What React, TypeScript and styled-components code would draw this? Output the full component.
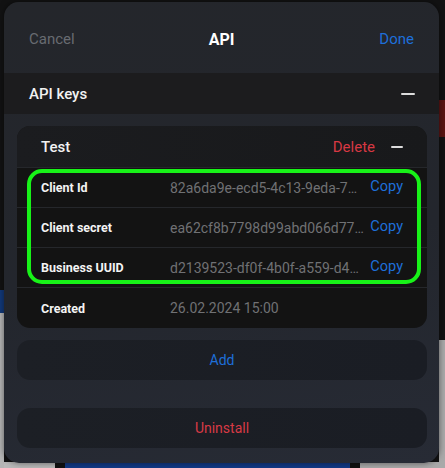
import React from "react";
import styled, { createGlobalStyle } from "styled-components";

const Global = createGlobalStyle`
  html, body { margin: 0; padding: 0; }
  body {
    width: 445px;
    height: 468px;
    overflow: hidden;
    font-family: Roboto, "Liberation Sans", sans-serif;
    background: #121213;
  }
`;

const Backdrop = styled.div`
  position: relative;
  width: 445px;
  height: 468px;
  padding: 2px 6px 5px 4px;
  box-sizing: border-box;
  background:
    linear-gradient(#12397a, #12397a) 0 290px / 4px 23px no-repeat,
    linear-gradient(#b5b5b5, #b5b5b5) 0 313px / 4px 155px no-repeat,
    linear-gradient(#5a1412, #5a1412) 439px 100px / 6px 37px no-repeat,
    linear-gradient(#a9a9a9, #a9a9a9) 439px 340px / 6px 128px no-repeat,
    linear-gradient(to right, #b9b9b9 0 55px, #111 55px 65px, #123a86 65px 350px, #111 350px 360px, #a9a9a9 360px) 0 462px / 445px 6px no-repeat,
    #121213;
`;

const Sheet = styled.div`
  height: 100%;
  border-radius: 15px;
  background: linear-gradient(170deg, #24262b 0%, #23262d 55%, #272b35 100%);
  display: flex;
  flex-direction: column;
  overflow: hidden;
  box-shadow: 0 0 6px rgba(0, 0, 0, 0.5);
`;

const Header = styled.div`
  height: 71px;
  box-sizing: border-box;
  padding: 3px 25px 0;
  display: grid;
  grid-template-columns: 1fr auto 1fr;
  align-items: center;
  flex-shrink: 0;
`;

const HeaderAction = styled.span<{ $tone: "muted" | "blue"; $align: "start" | "end" }>`
  font-size: 15px;
  color: ${(p) => (p.$tone === "blue" ? "#1e6fd9" : "#686b71")};
  justify-self: ${(p) => p.$align};
`;

const Title = styled.span`
  font-size: 16px;
  font-weight: 700;
  color: #ffffff;
`;

const SectionBar = styled.div`
  height: 41px;
  background: #1c1c1e;
  display: flex;
  align-items: center;
  justify-content: space-between;
  padding: 0 24px 0 25px;
  flex-shrink: 0;
`;

const SectionTitle = styled.span`
  font-size: 15px;
  font-weight: 500;
  color: #f2f2f2;
`;

const Minus = styled.span<{ $w: number }>`
  width: ${(p) => p.$w}px;
  height: 2px;
  background: #dcdcdc;
  border-radius: 1px;
`;

const Body = styled.div`
  display: flex;
  flex-direction: column;
  padding: 12px 12px 16px 13px;
`;

const Card = styled.div`
  background: #131313;
  border-radius: 13px;
  overflow: hidden;
`;

const CardHeader = styled.div`
  height: 40px;
  background: linear-gradient(to right, #1b1c1f, #18191b);
  border-bottom: 1px solid #25272b;
  display: flex;
  align-items: center;
  padding: 1px 24px 0;
  box-sizing: content-box;
  gap: 16px;
`;

const CardTitle = styled.span`
  font-size: 15px;
  font-weight: 500;
  color: #f2f2f2;
  flex: 1;
`;

const DeleteLink = styled.span`
  font-size: 15px;
  color: #d73843;
`;

const Highlighted = styled.div`
  position: relative;
  &::after {
    content: "";
    position: absolute;
    left: 10px;
    right: 6px;
    top: 1px;
    bottom: 4px;
    border: 4px solid #18f218;
    border-radius: 15px;
    pointer-events: none;
  }
`;

const Row = styled.div<{ $last?: boolean }>`
  height: 40px;
  box-sizing: border-box;
  display: grid;
  grid-template-columns: 129px 1fr auto;
  align-items: center;
  padding: 0 24px 0 24px;
  border-bottom: ${(p) => (p.$last ? "none" : "1px solid #25272b")};
`;

const Label = styled.span`
  font-size: 12.5px;
  font-weight: 700;
  color: #f4f4f4;
`;

const Value = styled.span`
  font-size: 14px;
  color: #707174;
  white-space: nowrap;
  overflow: hidden;
  text-overflow: ellipsis;
  margin-right: 6px;
`;

const CopyLink = styled.span`
  font-size: 14.5px;
  color: #1e6fd9;
  margin-top: -2px;
`;

const ActionButton = styled.div<{ $tone: "blue" | "red"; $gap: number }>`
  margin-top: ${(p) => p.$gap}px;
  height: 40px;
  border-radius: 13px;
  background: linear-gradient(to right, #1c1f25, #1a1d24);
  display: flex;
  align-items: center;
  justify-content: center;
  font-size: 14px;
  color: ${(p) => (p.$tone === "blue" ? "#1e6fd9" : "#d83a45")};
`;

const keys = [
  { label: "Client Id", value: "82a6da9e-ecd5-4c13-9eda-7e2b41f0c9a7" },
  { label: "Client secret", value: "ea62cf8b7798d99abd066d77f1c2a93e" },
  { label: "Business UUID", value: "d2139523-df0f-4b0f-a559-d4c81a7e0f2b" },
];

export default function App() {
  return (
    <>
      <Global />
      <Backdrop>
        <Sheet>
          <Header>
            <HeaderAction $tone="muted" $align="start">Cancel</HeaderAction>
            <Title>API</Title>
            <HeaderAction $tone="blue" $align="end">Done</HeaderAction>
          </Header>
          <SectionBar>
            <SectionTitle>API keys</SectionTitle>
            <Minus $w={14} />
          </SectionBar>
          <Body>
            <Card>
              <CardHeader>
                <CardTitle>Test</CardTitle>
                <DeleteLink>Delete</DeleteLink>
                <Minus $w={12} />
              </CardHeader>
              <Highlighted>
                {keys.map((k) => (
                  <Row key={k.label}>
                    <Label>{k.label}</Label>
                    <Value>{k.value}</Value>
                    <CopyLink>Copy</CopyLink>
                  </Row>
                ))}
              </Highlighted>
              <Row $last>
                <Label>Created</Label>
                <Value>26.02.2024 15:00</Value>
                <span />
              </Row>
            </Card>
            <ActionButton $tone="blue" $gap={12}>Add</ActionButton>
            <ActionButton $tone="red" $gap={28}>Uninstall</ActionButton>
          </Body>
        </Sheet>
      </Backdrop>
    </>
  );
}
